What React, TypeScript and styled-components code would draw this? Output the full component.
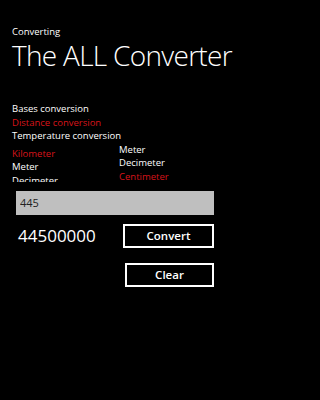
import React from "react";
import styled, { createGlobalStyle } from "styled-components";

const Global = createGlobalStyle`
  html, body { margin: 0; padding: 0; background: #000; }
  body { font-family: "Open Sans", "Noto Sans", sans-serif; color: #fff; }
  * { box-sizing: border-box; }
`;

const Page = styled.div`
  width: 240px;
  height: 400px;
  background: #000;
  overflow: hidden;
  display: flex;
  flex-direction: column;
`;

const Header = styled.header`
  padding: 25px 0 0 12px;
  display: flex;
  flex-direction: column;
`;

const AppName = styled.div`
  font-size: 9.5px;
  line-height: 13px;
  font-weight: 400;
`;

const Title = styled.h1`
  margin: 2px 0 2px 0;
  font-size: 28px;
  line-height: 30px;
  font-weight: 300;
  letter-spacing: -0.7px;
  white-space: nowrap;
`;

const Menu = styled.ul`
  list-style: none;
  margin: 30px 0 0 12px;
  padding: 0;
  display: flex;
  flex-direction: column;
`;

const Item = styled.li<{ $active?: boolean }>`
  font-size: 9.5px;
  line-height: 13.5px;
  color: ${(p) => (p.$active ? "#d8141a" : "#fff")};
  white-space: nowrap;
`;

const Units = styled.div`
  display: grid;
  grid-template-columns: 107px 1fr;
  margin: 0 0 0 12px;
`;

const UnitList = styled.ul<{ $offset: number; $height: number }>`
  list-style: none;
  margin: ${(p) => p.$offset}px 0 0 0;
  padding: 0;
  height: ${(p) => p.$height}px;
  overflow: hidden;
`;

const Form = styled.div`
  margin: 6px 26px 0 16px;
  display: flex;
  flex-direction: column;
`;

const Input = styled.input`
  height: 24px;
  width: 100%;
  border: none;
  outline: none;
  background: #bfbfbf;
  color: #222;
  font-family: "Open Sans", "Noto Sans", sans-serif;
  font-size: 11px;
  padding: 0 4px;
  margin: 0;
`;

const Row = styled.div`
  display: flex;
  align-items: center;
  justify-content: space-between;
  margin-top: 9px;
`;

const Result = styled.div`
  font-size: 17px;
  line-height: 24px;
  padding-left: 2px;
  font-weight: 400;
`;

const Button = styled.button<{ $w: number }>`
  width: ${(p) => p.$w}px;
  height: 24px;
  border: 2px solid #fff;
  background: #000;
  color: #fff;
  font-family: "Open Sans", "Noto Sans", sans-serif;
  font-size: 11.5px;
  font-weight: 600;
  padding: 0;
  margin: 0;
`;

const ButtonRow = styled.div`
  display: flex;
  justify-content: flex-end;
  margin-top: 15px;
`;

export default function App() {
  return (
    <>
      <Global />
      <Page>
        <Header>
          <AppName>Converting</AppName>
          <Title>The ALL Converter</Title>
        </Header>
        <Menu>
          <Item>Bases conversion</Item>
          <Item $active>Distance conversion</Item>
          <Item>Temperature conversion</Item>
        </Menu>
        <Units>
          <UnitList $offset={4} $height={35}>
            <Item $active>Kilometer</Item>
            <Item>Meter</Item>
            <Item>Decimeter</Item>
          </UnitList>
          <UnitList $offset={0} $height={42}>
            <Item>Meter</Item>
            <Item>Decimeter</Item>
            <Item $active>Centimeter</Item>
          </UnitList>
        </Units>
        <Form>
          <Input defaultValue="445" />
          <Row>
            <Result>44500000</Result>
            <Button $w={91}>Convert</Button>
          </Row>
          <ButtonRow>
            <Button $w={89}>Clear</Button>
          </ButtonRow>
        </Form>
      </Page>
    </>
  );
}
